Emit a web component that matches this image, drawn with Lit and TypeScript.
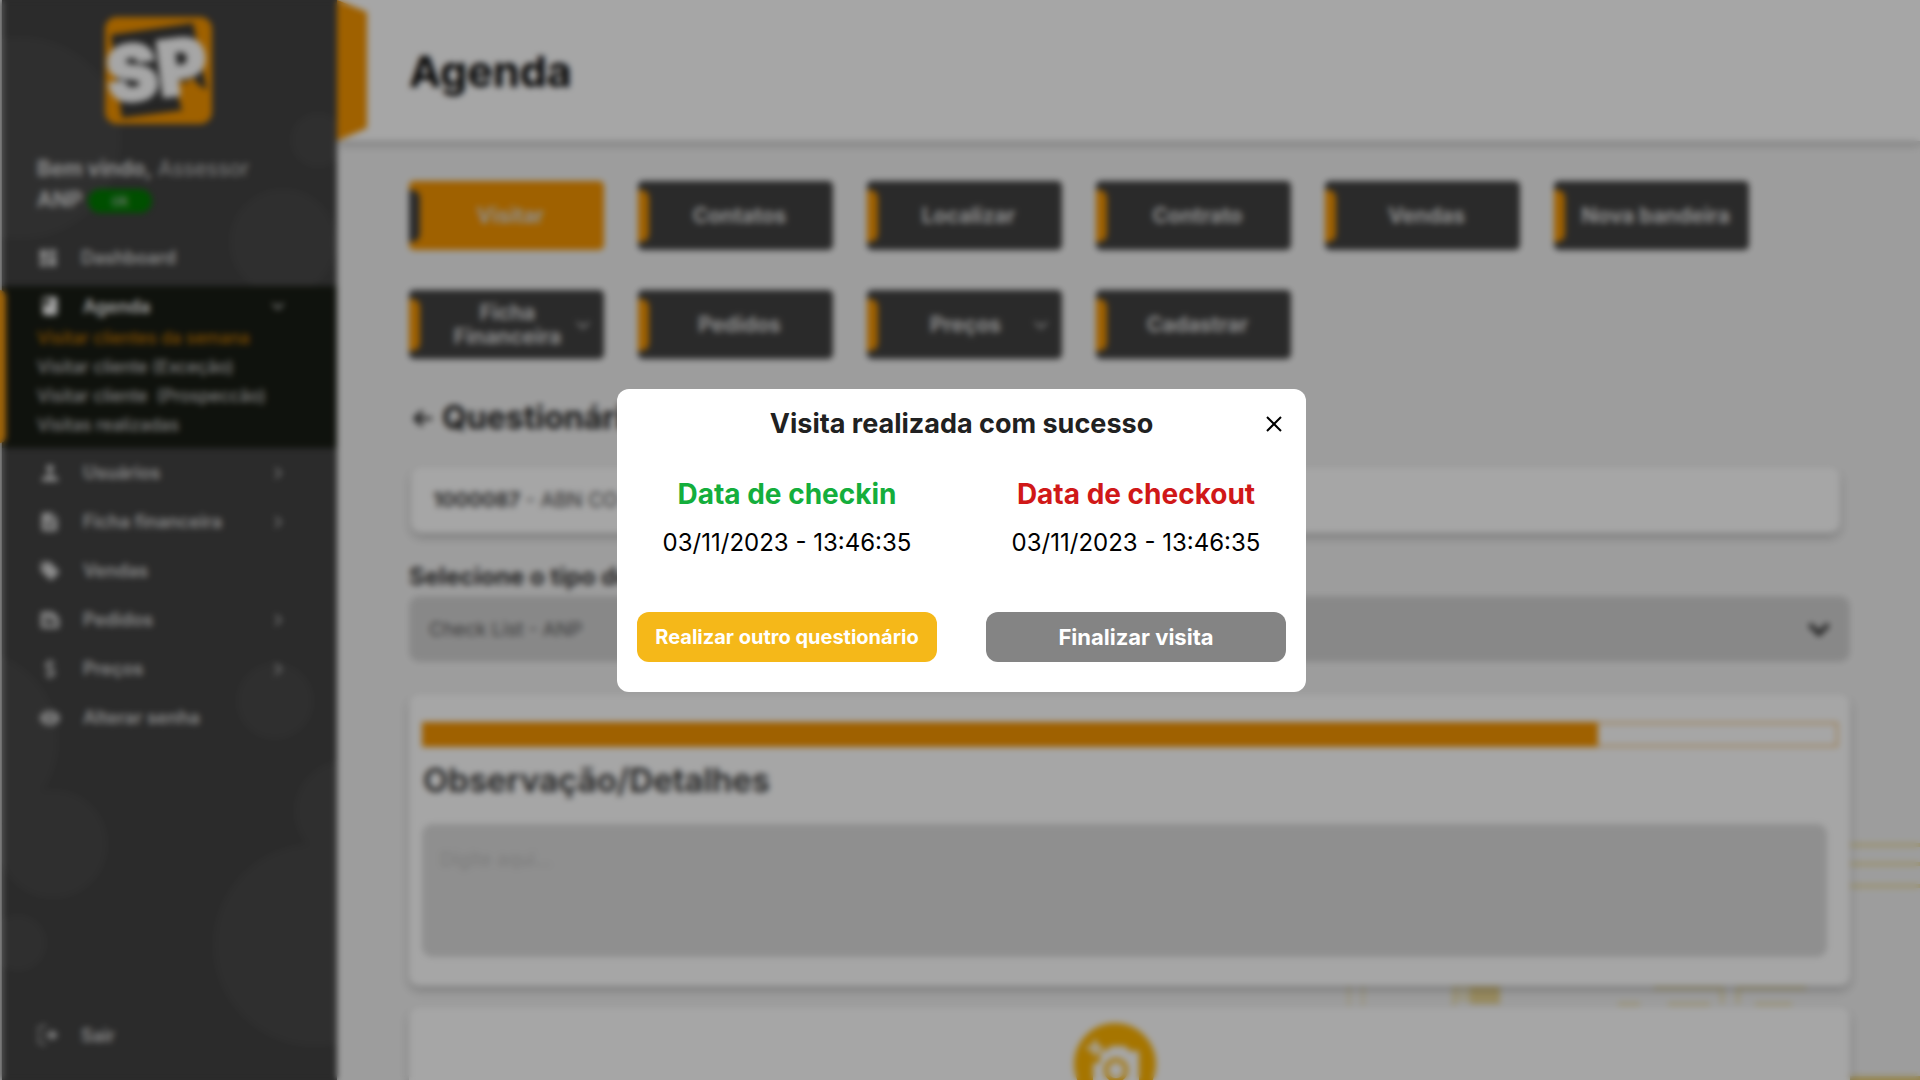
import { LitElement, html, css, svg, nothing } from "lit";
import { customElement } from "lit/decorators.js";
import { classMap } from "lit/directives/class-map.js";

const ICONS = {
  dashboard: svg`<path d="M3 3h8v10H3zM13 3h8v6h-8zM13 11h8v10h-8zM3 15h8v6H3z"/>`,
  book: svg`<path d="M18 2H6a2 2 0 0 0-2 2v16a2 2 0 0 0 2 2h12a2 2 0 0 0 2-2V4a2 2 0 0 0-2-2zM6 4h5v8l-2.500-1.500L6 12z" fill-rule="evenodd"/>`,
  person: svg`<path d="M12 11a4 4 0 1 0 0-8 4 4 0 0 0 0 8zm-1 1-1 3c-4 .5-7 2-7 4v2h18v-2c0-2-3-3.500-7-4l-1-3z"/>`,
  file: svg`<path d="M5 2h9l6 6v12a2 2 0 0 1-2 2H5a2 2 0 0 1-2-2V4a2 2 0 0 1 2-2zm8 2v5h5zM7 12v2h9v-2zm0 4v2h9v-2z" fill-rule="evenodd"/>`,
  tag: svg`<path d="M21.400 11.600l-9-9A2 2 0 0 0 11 2H4a2 2 0 0 0-2 2v7c0 .6.200 1 .6 1.400l9 9a2 2 0 0 0 2.800 0l7-7a2 2 0 0 0 0-2.800zM5.500 7a1.500 1.500 0 1 1 0-3 1.500 1.500 0 0 1 0 3z" fill-rule="evenodd"/>`,
  order: svg`<path d="M4 3h11l7 7v9a2 2 0 0 1-2 2H4a2 2 0 0 1-2-2V5a2 2 0 0 1 2-2zm2 5v2h7V8zm0 4v5h12v-5z" fill-rule="evenodd"/>`,
  money: svg`<path d="M17 7c-1-2-3-2.500-5-2.500S7.500 5.500 7.500 8s2 3.200 4.500 3.800 5 1.400 5 4-2.500 3.700-5 3.700-4.500-1-5-3M12 1.500v21" fill="none" stroke="currentColor" stroke-width="2"/>`,
  eye: svg`<path d="M12 4C7 4 2.700 7 1 12c1.700 5 6 8 11 8s9.300-3 11-8c-1.700-5-6-8-11-8zm0 13a5 5 0 1 1 0-10 5 5 0 0 1 0 10zm0-2a3 3 0 1 0 0-6 3 3 0 0 0 0 6z" fill-rule="evenodd"/>`,
  exit: svg`<path d="M10 2H4a2 2 0 0 0-2 2v16a2 2 0 0 0 2 2h6" fill="none" stroke="currentColor" stroke-width="2" stroke-dasharray="5 2"/><path d="M9 10.500h6V6l8 6-8 6v-4.500H9z"/>`,
};

type IconName = keyof typeof ICONS;

const icon = (name: IconName) =>
  html`<svg class="icon" viewBox="0 0 24 24" fill="currentColor" aria-hidden="true">${ICONS[name]}</svg>`;

const chevron = (turn: "down" | "right") => html`
  <svg class="chevron" viewBox="0 0 24 24" fill="none" stroke="currentColor" stroke-width="3" aria-hidden="true">
    <path d=${turn === "down" ? "M4 8l8 8 8-8" : "M8 4l8 8-8 8"} />
  </svg>`;

interface MenuItem {
  label: string;
  icon: IconName;
  arrow?: boolean;
}

const MENU: MenuItem[] = [
  { label: "Usuários", icon: "person", arrow: true },
  { label: "Ficha financeira", icon: "file", arrow: true },
  { label: "Vendas", icon: "tag" },
  { label: "Pedidos", icon: "order", arrow: true },
  { label: "Preços", icon: "money", arrow: true },
  { label: "Alterar senha", icon: "eye" },
];

const AGENDA = [
  "Visitar clientes da semana",
  "Visitar cliente (Exceção)",
  "Visitar cliente \u00a0(Prospeccão)",
  "Visitas realizadas",
];

@customElement("side-menu")
class SideMenu extends LitElement {
  static styles = css`
    :host {
      display: flex;
      flex-direction: column;
      position: relative;
      background: #424242;
      color: #d8d8d8;
      box-sizing: border-box;
      padding: 17px 0 32px;
    }
    .circles {
      position: absolute;
      inset: 0;
      width: 100%;
      height: 100%;
      overflow: hidden;
    }
    .logo {
      width: 107px;
      height: 107px;
      position: relative;
      margin: 0 0 0 103px;
      overflow: visible;
    }
    .welcome {
      position: relative;
      margin: 29px 20px 0 35px;
      font-size: 21px;
      line-height: 31px;
      color: #c4c4c4;
    }
    .welcome strong {
      color: #dcdcdc;
    }
    .badge {
      display: inline-block;
      width: 64px;
      border-radius: 12px;
      background: #007a00;
      font-size: 15px;
      line-height: 24px;
      text-align: center;
      vertical-align: middle;
    }
    nav {
      position: relative;
      flex: 1;
      display: flex;
      flex-direction: column;
    }
    a {
      color: inherit;
      text-decoration: none;
    }
    .item {
      display: flex;
      align-items: center;
      gap: 22px;
      height: 49px;
      padding: 0 51px 0 37px;
      font-size: 18px;
      font-weight: 600;
    }
    .item span {
      flex: 1;
    }
    .icon {
      width: 22px;
      height: 22px;
    }
    .chevron {
      width: 16px;
      height: 16px;
      opacity: 0.8;
    }
    .first {
      margin-top: 18px;
      padding-left: 35px;
    }
    .group {
      position: relative;
      background: #181c14;
      padding-bottom: 8px;
      margin-top: 4px;
    }
    .group::before {
      content: "";
      position: absolute;
      left: -2px;
      top: 4px;
      bottom: 5px;
      width: 6px;
      background: #f59b10;
      border-radius: 0 6px 6px 0;
    }
    .group .item {
      height: 36px;
      padding-top: 2px;
      color: #ffffff;
    }
    .sub {
      display: block;
      padding-left: 35px;
      font-size: 17px;
      font-weight: 500;
      line-height: 29px;
      color: #c8c8c8;
    }
    .current {
      color: #c47800;
    }
    .exit {
      margin-top: auto;
      height: 26px;
      padding-left: 35px;
    }
  `;

  render() {
    return html`
      <svg class="circles" aria-hidden="true" fill="#494949">
        <circle cx="18" cy="138" r="101" />
        <circle cx="316" cy="140" r="27" />
        <circle cx="281" cy="242" r="53" />
        <circle cx="273" cy="701" r="38" />
        <circle cx="-34" cy="740" r="90" />
        <circle cx="51" cy="844" r="54" />
        <circle cx="16" cy="943" r="28" />
        <circle cx="343" cy="811" r="50" />
        <circle cx="313" cy="945" r="101" />
      </svg>
      <svg class="logo" viewBox="0 0 108 108" role="img" aria-label="SP">
        <rect width="108" height="108" rx="12" fill="#f59500" />
        <path d="M6 18 89 6l14 68-18-12-10 14 3 18-61 8z" fill="#3a3a3a" />
        <path d="M78 62l5 12 6-14 6 12 8 4v14l-26 2-5-20z" fill="#f59500" />
        <text
          x="53" y="81" text-anchor="middle" transform="rotate(-7 53 60)"
          font-family="Inter, sans-serif" font-size="77" font-weight="900"
          fill="#ffffff" stroke="#ffffff" stroke-width="3" stroke-linejoin="round"
          >SP</text>
      </svg>
      <div class="welcome">
        <strong>Bem vindo,</strong> Assessor<br />
        <strong>ANP</strong> <span class="badge">ok</span>
      </div>
      <nav>
        <a class="item first" href="#dashboard">${icon("dashboard")}<span>Dashboard</span></a>
        <div class="group">
          <a class="item" href="#agenda">${icon("book")}<span>Agenda</span>${chevron("down")}</a>
          ${AGENDA.map(
            (label, i) => html`<a class=${classMap({ sub: true, current: i === 0 })} href="#visitas">${label}</a>`
          )}
        </div>
        ${MENU.map(
          (m) => html`<a class="item" href="#menu">
            ${icon(m.icon)}<span>${m.label}</span>${m.arrow ? chevron("right") : nothing}
          </a>`
        )}
        <a class="item exit" href="#sair">${icon("exit")}<span>Sair</span></a>
      </nav>
    `;
  }
}

@customElement("visit-dialog")
class VisitDialog extends LitElement {
  static styles = css`
    :host {
      display: block;
      box-sizing: border-box;
      width: 689px;
      max-width: 100%;
      padding: 16px 20px 30px;
      border-radius: 12px;
      background: #ffffff;
      color: #000000;
    }
    header {
      display: grid;
      grid-template-columns: 24px 1fr 24px;
      align-items: center;
    }
    h2 {
      grid-column: 2;
      margin: 0;
      font-size: 27px;
      font-weight: 700;
      line-height: 38px;
      text-align: center;
      color: #212121;
    }
    button {
      font: inherit;
      border: 0;
      cursor: pointer;
    }
    .close {
      display: flex;
      justify-content: center;
      padding: 0;
      background: none;
    }
    .close svg {
      width: 16px;
      height: 16px;
    }
    .columns {
      display: grid;
      grid-template-columns: 1fr 1fr;
      column-gap: 49px;
      margin-top: 27px;
      text-align: center;
    }
    h3 {
      margin: 0;
      font-size: 28px;
      font-weight: 700;
      line-height: 48px;
    }
    .in {
      color: #14ae3c;
    }
    .out {
      color: #d01818;
    }
    p {
      margin: 0 0 44px;
      font-size: 24px;
      line-height: 50px;
    }
    .action {
      width: 100%;
      height: 50px;
      padding: 0;
      border-radius: 12px;
      color: #ffffff;
      font-weight: 700;
      font-size: 20px;
    }
    .again {
      background: #f5b819;
    }
    .finish {
      background: #848484;
      font-size: 22px;
    }
  `;

  render() {
    return html`
      <header>
        <h2>Visita realizada com sucesso</h2>
        <button class="close" aria-label="Fechar">
          <svg viewBox="0 0 16 16" stroke="#000" stroke-width="2"><path d="M1 1l14 14M15 1L1 15" /></svg>
        </button>
      </header>
      <div class="columns">
        <section>
          <h3 class="in">Data de checkin</h3>
          <p>03/11/2023 - 13:46:35</p>
          <button class="action again">Realizar outro questionário</button>
        </section>
        <section>
          <h3 class="out">Data de checkout</h3>
          <p>03/11/2023 - 13:46:35</p>
          <button class="action finish">Finalizar visita</button>
        </section>
      </div>
    `;
  }
}

interface Tab {
  label: string;
  active?: boolean;
  menu?: boolean;
}

const TABS: Tab[] = [
  { label: "Visitar", active: true },
  { label: "Contatos" },
  { label: "Localizar" },
  { label: "Contrato" },
  { label: "Vendas" },
  { label: "Nova bandeira" },
  { label: "Ficha Financeira", menu: true },
  { label: "Pedidos" },
  { label: "Preços", menu: true },
  { label: "Cadastrar" },
];

const PROGRESS = 83;

@customElement("app-root")
class AppRoot extends LitElement {
  static styles = css`
    :host {
      display: grid;
      grid-template-columns: 335px 1fr;
      position: relative;
      box-sizing: border-box;
      height: 100vh;
      padding-left: 2px;
      overflow: hidden;
      background: #f2f2f2;
      font-family: Inter, "Open Sans", sans-serif;
      color: #222222;
    }
    main {
      position: relative;
      min-width: 0;
      overflow: hidden;
    }
    .decor {
      position: absolute;
      right: 0;
      bottom: 0;
      width: 600px;
      height: 250px;
      opacity: 0.7;
    }
    .top {
      position: relative;
      display: flex;
      align-items: center;
      gap: 42px;
      height: 141px;
      background: #ffffff;
      box-shadow: 0 3px 8px rgba(0, 0, 0, 0.25);
    }
    .flag {
      width: 30px;
      height: 141px;
      background: #f59500;
      clip-path: polygon(0 0, 100% 12px, 100% 128px, 0 100%);
    }
    h1 {
      margin: 0;
      font-size: 43px;
      color: #080808;
    }
    .body {
      position: relative;
      padding: 40px 70px 0 72px;
    }
    .tabs {
      display: flex;
      flex-wrap: wrap;
      gap: 40px 34px;
    }
    .tab {
      position: relative;
      display: flex;
      align-items: center;
      justify-content: center;
      width: 195px;
      height: 69px;
      padding: 1px 8px 0 16px;
      border: 0;
      border-radius: 5px;
      background: #414141;
      color: #dddddd;
      font: inherit;
      font-size: 21px;
      font-weight: 700;
      line-height: 24px;
    }
    .tab::before {
      content: "";
      position: absolute;
      left: 0;
      top: 9px;
      bottom: 8px;
      width: 11px;
      border-radius: 0 8px 8px 0;
      background: #f59500;
    }
    .tab.active {
      background: #f59500;
    }
    .tab.active::before {
      background: #414141;
    }
    .tab.menu {
      padding: 1px 33px 0 35px;
    }
    .tab .chevron {
      position: absolute;
      right: 12px;
      width: 18px;
      height: 18px;
      opacity: 0.8;
    }
    .title {
      display: flex;
      align-items: center;
      gap: 10px;
      margin-top: 39px;
      padding-left: 4px;
    }
    .title svg {
      width: 19px;
      height: 19px;
    }
    h2 {
      margin: 0;
      font-size: 32px;
      line-height: 40px;
    }
    .card {
      background: #ffffff;
      border-radius: 10px;
      box-shadow: 0 4px 8px rgba(0, 0, 0, 0.25);
    }
    .client {
      margin: 29px 10px 0 2px;
      padding: 1px 22px 0;
      font-size: 20px;
      line-height: 65px;
      color: #444444;
      white-space: pre;
    }
    .label {
      display: block;
      margin-top: 30px;
      font-size: 24px;
      font-weight: 700;
      line-height: 28px;
      color: #333333;
    }
    .field {
      position: relative;
      display: flex;
      align-items: center;
      margin-top: 5px;
    }
    select {
      appearance: none;
      width: 100%;
      height: 66px;
      padding: 0 20px;
      border: 0;
      border-radius: 10px;
      background: #d2d2d2;
      color: #555555;
      font: inherit;
      font-size: 19px;
    }
    .field .chevron {
      position: absolute;
      right: 17px;
      width: 28px;
      height: 28px;
      stroke-width: 4px;
      color: #333333;
      pointer-events: none;
    }
    .notes {
      margin-top: 32px;
      padding: 28px 12px 29px 13px;
    }
    .progress {
      height: 25px;
      box-sizing: border-box;
      border: 2px solid #f2c27c;
    }
    .fill {
      height: 100%;
      background: #f59500;
      outline: 2px solid #f59500;
    }
    .heading {
      margin: 13px 0 0 1px;
      font-size: 33px;
      font-weight: 600;
      line-height: 40px;
    }
    textarea {
      display: block;
      box-sizing: border-box;
      width: calc(100% - 11px);
      height: 133px;
      margin-top: 24px;
      padding: 24px 18px;
      border: 0;
      border-radius: 10px;
      background: #dcdcdc;
      font: inherit;
      font-size: 19px;
      resize: none;
    }
    textarea::placeholder {
      color: #c0c0c0;
    }
    .photo {
      display: flex;
      justify-content: center;
      margin-top: 21px;
      padding: 16px 30px 30px 0;
    }
    .camera {
      padding: 0;
      border: 0;
      background: none;
    }
    .camera svg {
      display: block;
      width: 82px;
      height: 82px;
    }
    .backdrop {
      position: absolute;
      inset: 0;
      display: flex;
      align-items: center;
      justify-content: center;
      padding-left: 3px;
      background: rgba(0, 0, 0, 0.35);
      backdrop-filter: blur(3px);
    }
  `;

  render() {
    return html`
      <side-menu></side-menu>
      <main>
        <svg class="decor" viewBox="0 0 600 250" fill="none" stroke="#ecd98c" stroke-width="2" aria-hidden="true">
          <path d="M500 15h100M500 34h100M500 56h100" stroke-width="4" />
          <path d="M500 248h100" stroke="#e0bd45" stroke-width="4" />
          <path d="M29 150v26M43 150v26" />
          <path d="M132 157h48M132 163h48M132 169h48M134 154v22" stroke-width="3" />
          <path d="M150 165h30" stroke="#e6ca6c" stroke-width="18" />
          <path d="M334 158h68v16M486 158h-68v16M298 174h22M348 174h42M435 174h37" stroke-width="3" />
        </svg>
        <header class="top">
          <div class="flag"></div>
          <h1>Agenda</h1>
        </header>
        <div class="body">
          <div class="tabs">
            ${TABS.map(
              (t) => html`<button class=${classMap({ tab: true, active: !!t.active, menu: !!t.menu })}>
                ${t.label}${t.menu ? chevron("down") : nothing}
              </button>`
            )}
          </div>
          <div class="title">
            <svg viewBox="0 0 18 18" fill="none" stroke="#222" stroke-width="3" aria-hidden="true">
              <path d="M18 9H3M9 2L2 9l7 7" />
            </svg>
            <h2>Questionário</h2>
          </div>
          <div class="card client"><strong>1000087</strong> - ABN CO</div>
          <label class="label" for="kind">Selecione o tipo de</label>
          <div class="field">
            <select id="kind">
              <option>Check List - ANP</option>
            </select>
            ${chevron("down")}
          </div>
          <section class="card notes">
            <div class="progress"><div class="fill" style="width:${PROGRESS}%"></div></div>
            <label class="label heading" for="notes">Observação/Detalhes</label>
            <textarea id="notes" placeholder="Digite aqui..."></textarea>
          </section>
          <section class="card photo">
            <button class="camera" aria-label="Adicionar foto">
              <svg viewBox="0 0 82 82">
                <circle cx="41" cy="41" r="41" fill="#ffb400" />
                <path d="M32 28l5-5h14l5 5h9v36H19V40h7V28z" fill="#fff" />
                <path d="M21 17v16M13 25h16" stroke="#fff" stroke-width="4" />
                <circle cx="42" cy="47" r="10" fill="none" stroke="#ffb400" stroke-width="4" />
              </svg>
            </button>
          </section>
        </div>
      </main>
      <div class="backdrop"><visit-dialog role="dialog" aria-modal="true"></visit-dialog></div>
    `;
  }
}
